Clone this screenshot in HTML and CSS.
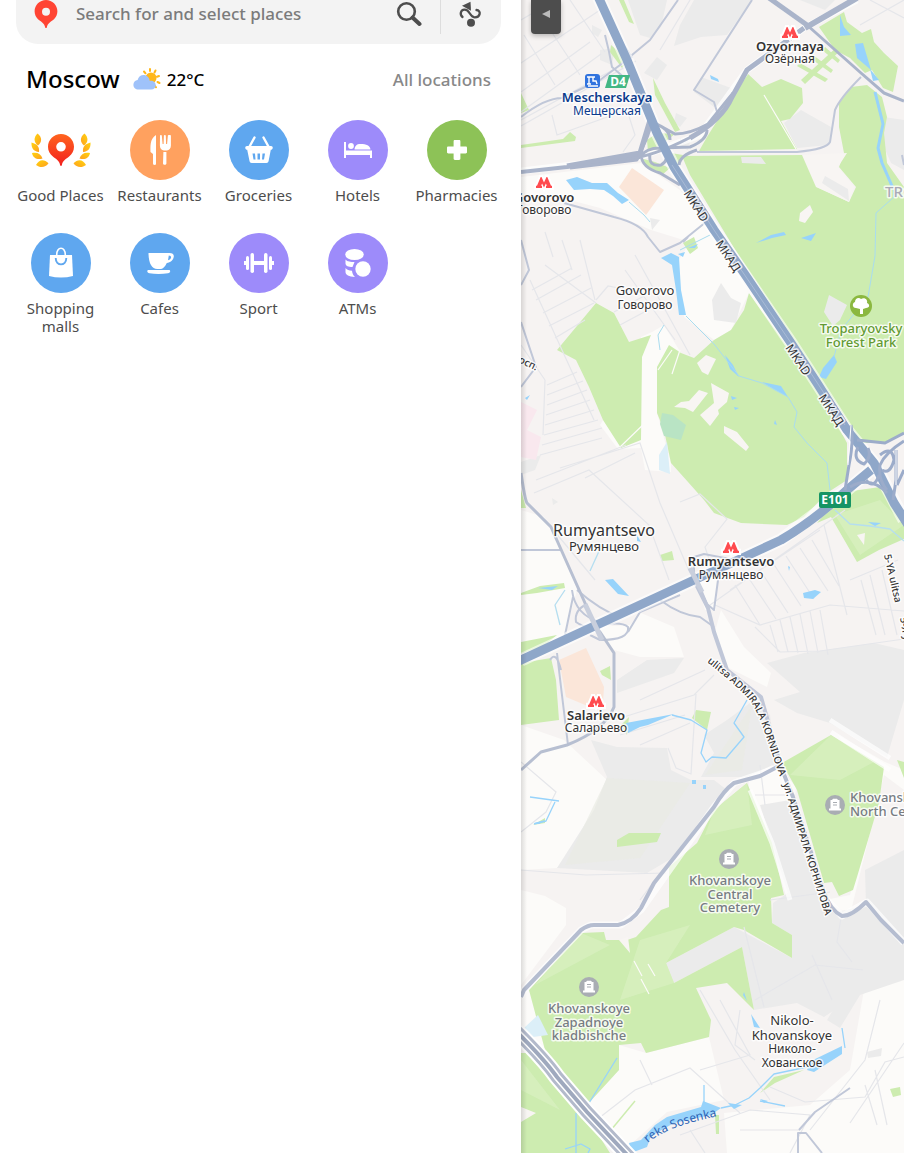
FILE: index.html
```html
<!DOCTYPE html>
<html lang="en">
<head>
<meta charset="utf-8">
<meta name="viewport" content="width=device-width, initial-scale=1">
<title>Moscow map</title>
<link rel="stylesheet" href="styles.css">
</head>
<body>
<aside class="sidebar">
  <form class="search" role="search">
    <svg class="search-pin" viewBox="0 0 24 30" aria-hidden="true"><path fill="#ff4433" fill-rule="evenodd" d="M12 1C5.700 1 .6 6 .6 12.300c0 3.200 1.300 6 3.400 8 2.300 2.100 6.500 3.700 7.200 8.200.1.700 1.500.7 1.600 0 .7-4.500 4.900-6.100 7.200-8.200 2.100-2 3.400-4.800 3.400-8C23.400 6 18.300 1 12 1Zm0 7.700a4 4 0 1 1 0 8 4 4 0 0 1 0-8Z"/></svg>
    <input class="search-input" type="text" placeholder="Search for and select places" aria-label="Search for and select places">
    <button class="icon-button" type="submit" aria-label="Search"><svg width="26" height="26" viewBox="0 0 26 26" fill="none" stroke="#4d4d4d"><circle cx="10.500" cy="10.500" r="8.300" stroke-width="2.600"/><path d="M16.500 16.500 23.500 23" stroke-width="4" stroke-linecap="round"/></svg></button>
    <span class="divider"></span>
    <button class="icon-button route" type="button" aria-label="Directions"><svg width="26" height="26" viewBox="0 0 26 26"><path d="M4.500 16C1.500 13.500 2.500 9 6.500 8.700c5.500-.3 5 7.300 10 7.600 6 .3 7-6.800 2-7.300" fill="none" stroke="#4d4d4d" stroke-width="2.300" stroke-linecap="round"/><circle cx="13" cy="21.700" r="4" fill="#4d4d4d"/><path d="m4 4.700 8.500-4 .5 9z" fill="#4d4d4d"/></svg></button>
  </form>

  <header class="city">
    <h1 class="city-name">Moscow</h1>
    <a class="weather" href="#weather">
      <svg width="28" height="22" viewBox="0 0 28 22" aria-hidden="true"><g stroke="#ffb71b" stroke-width="2" stroke-linecap="round"><path d="m11 3.500 1.500 1.800M17 1v2M22.500 2.500l-1 2M26 8l-2 .8M24.500 14l2 1M22 18l1 1.300"/></g><circle cx="18" cy="10" r="5.500" fill="#ffb71b"/><path fill="#9fc2fa" d="M5.500 21.500C2.500 21.500.4 19.400.4 16.700c0-2.500 1.800-4.500 4.200-4.800C5.300 9 7.700 7 10.600 7c3.300 0 5.700 2.500 6.100 5.700 3.500-.5 6.100 1.600 6.100 4.600 0 2.500-1.900 4.200-4.400 4.200Z"/></svg>
      <span>22°C</span>
    </a>
    <a class="all-locations" href="#locations">All locations</a>
  </header>

  <nav class="catalog" aria-label="Categories">
    <a class="category" href="#good"><span class="disc"><svg width="60" height="60" viewBox="0 0 60 60"><defs><linearGradient id="pin" x2="0" y2="1"><stop stop-color="#ff641f"/><stop offset="1" stop-color="#f2201e"/></linearGradient><linearGradient id="gold" x2="1" y2="1"><stop stop-color="#ffd40e"/><stop offset="1" stop-color="#ff9f1f"/></linearGradient></defs><path fill="url(#pin)" fill-rule="evenodd" d="M30 14c-7.200 0-13 5.700-13 12.800 0 4 1.900 7.500 4.900 9.800 3 2.500 6.300 3.900 7.200 8.400.2 1.200 1.600 1.200 1.800 0 .9-4.500 4.200-5.900 7.200-8.400 3-2.300 4.900-5.800 4.900-9.800C43 19.700 37.200 14 30 14Zm0 8a4.800 4.800 0 1 1 0 9.600 4.800 4.800 0 0 1 0-9.600Z"/><g id="laurel" fill="url(#gold)"><path d="M6.500 13.500c5 4 4.500 8.500.5 12-4.500-3.500-4.500-8-.5-12Z"/><path d="M.5 22.500c6 1.500 8 4.500 7.500 9.500-5.500-.5-7.800-4-7.500-9.500Z"/><path d="M1 33c5.500-1 9 1 10.500 5.500-5.500 1.500-9.300-.2-10.500-5.500Z"/><path d="M5 45c3-5.500 8-6.200 12.500-1.700-3 4.500-8.500 4.700-12.500 1.700Z"/></g><use href="#laurel" transform="matrix(-1 0 0 1 60 0)"/></svg></span><span class="category-name">Good Places</span></a>
    <a class="category" href="#restaurants"><span class="disc orange"><svg width="60" height="60" viewBox="0 0 60 60" fill="#fff"><path d="M26 15v29.500c-2 1-3 .3-3-1V34l-2.500-2c0-5-1-13 5.500-17ZM30 15.500c0-.8 1.800-.8 1.800 0L32.600 24h1l.3-8.500c0-.8 1.900-.8 1.900 0l.3 8.500h1l.8-8.500c0-.8 3-.8 3 0v10c0 2.800-1.700 4.800-4 4.900h-3c-2.400-.1-4-2.100-4-4.900ZM33.400 32h3v11.500c0 1.700-3.400 1.700-3.400 0Z"/></svg></span><span class="category-name">Restaurants</span></a>
    <a class="category" href="#groceries"><span class="disc blue"><svg width="60" height="60" viewBox="0 0 60 60" fill="#fff"><path d="m25.500 17.500-5.500 10M34.500 17.500l5.500 10" stroke="#fff" stroke-width="2.400" stroke-linecap="round"/><path fill-rule="evenodd" d="M18 26h24c1.500 0 2 1.200 1.600 2.400-.3.900-1 1.300-1.800 1.300L39.600 41c-.2 1.300-1 2-2.200 2H22.700c-1.200 0-2-.7-2.200-2l-2.300-11.300c-.8 0-1.600-.4-1.800-1.300-.4-1.200.1-2.400 1.600-2.400Zm5.500 7.500 1 6h2l-.5-6Zm5 0v6h2.500v-6Zm5 0-.5 6h2l1-6Z"/></svg></span><span class="category-name">Groceries</span></a>
    <a class="category" href="#hotels"><span class="disc violet"><svg width="60" height="60" viewBox="0 0 60 60" fill="#fff"><path d="M16 22h2v8.500h26V38h-2v-3H18v3h-2ZM26.500 29.500c.3-3.500 2-5.500 6-5.500 6 0 9.500 1.500 10 5.500Z"/><circle cx="23" cy="26" r="2.900"/></svg></span><span class="category-name">Hotels</span></a>
    <a class="category" href="#pharmacies"><span class="disc green"><svg width="60" height="60" viewBox="0 0 60 60" fill="#fff"><path d="M28 20h4c1 0 1.400.5 1.400 1.400v5.200h5.200c.9 0 1.400.4 1.400 1.400v4c0 1-.5 1.400-1.400 1.400h-5.200v5.200c0 .9-.4 1.400-1.400 1.400h-4c-1 0-1.400-.5-1.400-1.400v-5.200h-5.200c-.9 0-1.400-.4-1.400-1.400v-4c0-1 .5-1.400 1.400-1.400h5.200v-5.200c0-.9.4-1.400 1.400-1.400Z"/></svg></span><span class="category-name">Pharmacies</span></a>
    <a class="category" href="#malls"><span class="disc blue"><svg width="60" height="60" viewBox="0 0 60 60"><path fill="#fff" d="M19 22h22l1 21c-8 2-16 2-24 0Z"/><path d="M25.700 22c-.3-9 8.900-9 8.600 0" fill="none" stroke="#fff" stroke-width="1.600"/><path d="M24.700 25c0 8.500 10.600 8.500 10.600 0" fill="none" stroke="#5fa7ef" stroke-width="1.900"/></svg></span><span class="category-name">Shopping malls</span></a>
    <a class="category" href="#cafes"><span class="disc blue"><svg width="60" height="60" viewBox="0 0 60 60"><path fill="#fff" fill-rule="evenodd" d="M18.500 20H38c4-.5 6 1 5.800 3.500-.3 3.500-3.500 6-7 6.500-2 4-4 6-6.500 6h-3c-5.500 0-8.800-6-8.800-16Zm20.300 2.500-.8 4.800c4-1 4-4.800.8-4.800ZM18 37h21.500c1.400 1 .5 3-1.500 3.300-6 1-13 1-18.500 0-2-.3-3-2.300-1.500-3.300Z"/></svg></span><span class="category-name">Cafes</span></a>
    <a class="category" href="#sport"><span class="disc violet"><svg width="60" height="60" viewBox="0 0 60 60" fill="#fff"><rect x="15" y="28" width="3" height="4"/><rect x="42" y="28" width="3" height="4"/><rect x="24" y="28" width="12" height="4"/><rect x="17" y="23" width="3" height="14" rx="1.500"/><rect x="21.500" y="20" width="3.500" height="20" rx="1.700"/><rect x="35" y="20" width="3.500" height="20" rx="1.700"/><rect x="40" y="23" width="3" height="14" rx="1.500"/></svg></span><span class="category-name">Sport</span></a>
    <a class="category" href="#atms"><span class="disc violet"><svg width="60" height="60" viewBox="0 0 60 60" fill="#fff"><ellipse cx="26.500" cy="21.500" rx="9.300" ry="5.500"/><path d="M17.500 26.500c2 2.500 5 2.300 9 2.500l-2 5c-4 0-7-1-7-3.500ZM17.500 35c1.500 2 3.500 2.500 6.500 2.700.2 2.500 1.200 4.500 3 6.300-6-.3-9.500-2-9.500-5Z"/><circle cx="35" cy="36" r="7.700"/></svg></span><span class="category-name">ATMs</span></a>
  </nav>
</aside>

<main class="map">
<svg class="map-canvas" viewBox="521 0 383 1153" preserveAspectRatio="xMinYMin slice" role="img" aria-label="Map of south-west Moscow">
  <defs>
    <path id="logo-m" d="M-8 5v-2.200h1L-3.300-6h.8L0-.5 2.500-6h.8L7 2.800h1V5H2V2.800h.9L1.900.4 0 4.500-1.900.4-2.900 2.800h.9V5Z"/>
    <g id="tomb"><circle r="10" fill="#a9adb3"/><path fill="#fff" d="M-6 5.500v-2h1.500V-5H-3l1-1.200h4L3-5h1.500v8.500H6v2Z"/><path d="M-2-2.500h4M-2 0h4" stroke="#a9adb3" stroke-width="1.200"/></g>
  </defs>
  <rect x="521" width="383" height="1153" fill="#f6f3f2"/>

  <g fill="#fcfbf9">
    <path d="M521 177 641 163 680 190 714 230 749 293 731 330 714 340 684 317 677 263 690 242 651 230 600 208 566 199 521 195Z"/>
    <path d="M641 337 652 332 664 325 681 353 657 367 657 413 671 463 671 472 645 470 641 448 618 449 600 425 642 357Z"/>
    <path d="M521 510 544 517 564 553 577 590 564 637 521 660ZM594 627 630 625 641 613 674 627 684 657 640 657 614 650ZM721 610 744 647 771 673 767 687 727 667 714 635ZM697 583 718 577 716 610 705 610Z"/>
    <path d="M521 725 564 740 607 780 581 840 557 868 521 870ZM521 890 545 896 566 908 566 925 521 985ZM747 760 761 760 781 770 796 787 794 805 782 820 788 870 772 840 750 800Z"/>
    <path d="M587 1105 619 1070 619 1045 646 1053 709 1037 724 1100 667 1112 630 1145ZM864 990 904 977V1153H727L724 1113 810 1105 850 1070ZM522 990 529 990 552 1040 545 1050 521 1030Z"/>
    <path d="M838 735 885 762 904 770V790L884 775 850 915 825 900 850 895 879 803Z"/>
  </g>

  <g fill="#ebebeb">
    <path d="M628 0H667L661 27 650 38 640 35ZM694 0H752L727 35 701 37 674 46 680 25ZM701 77 731 88 727 105 714 107 694 92ZM657 57 667 65 657 80 644 73ZM784 123 801 110 831 127 829 145 797 148ZM884 117 904 120V170L891 163 884 147ZM676 113 687 118 680 127 674 122ZM592 25 602 30 598 37 592 33ZM600 50 615 48 612 65 600 60ZM800 0H835L825 10Z"/>
    <path d="M721 283 731 298 741 303 736 323 714 320 712 300ZM521 462 541 455 535 470 521 475ZM552 498 558 502 553 505Z"/>
    <path d="M767 663 804 653 874 643 904 650V700L887 757 830 723 797 713 774 700 800 692ZM617 680 647 660 684 658 674 673 617 693ZM591 740 617 747 667 748 671 770 691 780 714 780 727 790 674 857 647 873 557 868 594 810 607 777ZM727 720 754 700 770 715 777 763 747 777 701 777 714 753 704 735Z"/>
    <path d="M760 805 790 800 824 887 827 897 838 912 866 905 865 870 904 850V980L854 997 824 1017 797 1003 754 1010 742 947 674 983 666 963 734 927 792 958V935L772 923 773 903 788 893Z"/>
    <path d="M845 990 860 995 840 1028 827 1020ZM867 1052 882 1048 881 1056 868 1058ZM680 138 690 142 688 150 680 147ZM650 218 660 220 652 230Z"/>
  </g>
  <g fill="#e9ebe4" opacity=".7"><path d="M607 778 690 783 640 858 565 865ZM705 775 752 705 742 770Z"/></g>

  <g fill="#cdecb0">
    <path d="M747 73 762 87 781 79 802 88 803 103 790 119 781 121 797 149 699 151 707 137Z"/>
    <path d="M682 156 804 155 817 187 849 202 856 187 839 167 844 153 839 127 839 103 851 87 867 85 882 97 887 117 884 133 887 163 904 187V434L887 443 862 443 734 248 690 175Z"/>
    <path d="M749 293 744 310 731 330 714 340 694 358 681 353 669 345 657 367 657 413 664 430 671 463 688 482 704 500 714 513 741 523 787 525 804 517 827 493 847 480 847 443 820 393Z"/>
    <path d="M596 303 614 313 629 342 651 335 642 357 641 440 621 448 603 420 589 387 576 360 557 350Z"/>
    <path d="M817 523 831 517 857 562 879 550 904 539V520L880 487 845 492Z"/>
    <path d="M819 27 844 12 847 22 862 33 871 29 874 42 884 53 898 66 893 92 883 88 872 70 865 73 850 58 835 50ZM839 45 842 49 805 84 801 80ZM800 63 828 79 825 82 797 66ZM813 55 833 70 831 73 810 58ZM825 47 840 60 838 63 822 50Z"/>
    <path d="M619 0H624L634 24 629 22ZM611 45 628 60 622 68 610 52ZM653 78 665 103 680 130 675 132 655 95ZM521 145 563 139 570 132 576 137 575 141 521 148ZM521 93 529 110 521 113ZM647 140 657 133 675 134 666 141 648 152ZM640 158 655 162 670 168 662 175 645 166ZM671 153 683 155 678 165ZM683 243 694 237 698 248 690 254Z"/>
    <path d="M521 490 526 508 521 508ZM521 593 540 586 564 583 565 588 537 593 521 595ZM521 642 557 635 545 645 521 654ZM521 663 551 658 556 680 559 720 521 725ZM660 555 672 551 674 560 662 561ZM600 671 610 666 611 680 602 675Z"/>
    <path d="M692 718 696 710 711 712 707 730ZM617 840 629 833 661 833 657 842 617 847ZM621 725 629 717 627 735ZM533 825 545 818 545 823Z"/>
    <path d="M714 810 747 783 772 843 784 895 771 898 772 923 792 935V958L744 930 734 927 666 963 674 983 742 947 754 1010 727 983 696 988 711 1020 709 1037 646 1053 641 1043 619 1045V1070L587 1105 545 1050 529 990 581 933 604 932 606 940 627 940 636 937 661 910 669 907V867L697 843Z"/>
    <path d="M782 763 831 735 884 767 879 803 857 877 853 890 839 896 832 882 824 883 797 790ZM521 1053 534 1053 591 1123 610 1153H521ZM760 1093 774 1077 804 1070 775 1083ZM890 1089 900 1087 901 1095 893 1097ZM715 1115H719V1134H716ZM897 760 904 762V778Z"/>
  </g>
  <g fill="#d8f0c0" opacity=".75"><path d="M714 810 747 783 752 825 705 835ZM581 933 610 945 535 985ZM640 940 690 925 666 963 674 983 620 1000ZM831 735 874 762 840 780 790 775ZM835 515 880 500 904 525 860 555ZM521 1060 560 1110 521 1090Z"/></g>
  <path fill="#b9e4c4" d="m662 413 11 2 13 10-5 15-17-4-4-12Z"/>
  <path fill="#dceff8" d="m659 455 8-13 3 32-11-4ZM524 1028l14-13 10 20-15 2Z"/>

  <g fill="#f8f5f3">
    <path d="M674 407 681 402 689 401 699 390 708 393 693 412 685 408ZM711 383 729 393 727 402 718 410 719 414 710 426 700 415 714 403ZM697 363 706 355 716 359 708 375 702 372ZM724 426 737 432 749 447 746 451 724 433ZM810 205 813 212 805 223 799 221 800 213ZM802 155 847 153 838 167 854 187 849 202 816 187ZM857 535 865 533 864 545ZM521 1107 536 1113 521 1122ZM619 940 628 937 630 953Z"/>
  </g>
  <path fill="#ebebeb" d="m829 295 18 10-7 15-7 6-9-14ZM825 176l23 13 1 12-27-18ZM741 157h20l5 7-24-1Z"/>
  <path fill="#fbe6d9" d="m632 168 32 22-18 25-27-28ZM559 660l27-12 18 39-1 16-13 4-24-10Z"/>
  <path fill="#f9e8ee" d="m521 402 16 8-10 20 14 7-5 23-15-3Z"/>
  <path d="M764 95 796 149M648 420 619 448M672 350l-14 20M680 350l-8 24M634 961l8 15M641 979l8 15M648 964l7 12" stroke="#fcfbf9" stroke-width="1.200" fill="none"/>
  <path d="M611 1130l24-29" stroke="#cdecb0" stroke-width="1.500" fill="none"/>

  <g fill="none" stroke="#e5e6ea" stroke-width="1.200">
    <path d="M521 63 600 10M521 92 590 42M524 35 555 85M545 22 580 75M570 0 605 52M521 20 555 0M521 112l80-58M552 115l5 20 70-25 8 25-12 17M521 120l110-60M521 126l115-65M660 50l30-50M870 0l34 18M860 25l44-25"/>
    <path d="M530 280 594 420M545 265 596 303M545 232l8 25M562 240l10 30M580 240l15 60M532 290l40-22M536 300l45-25M543 313l48-25M549 326l45-23M555 338l30-18M596 300l12-14 40 8M625 270l50 70M635 255l55 100M620 325l28-15M614 312l30-16"/>
    <path d="M521 345 545 380M545 380 543 435M547 385l30-13M547 395l36-14M547 405l40-15M546 415l44-15M545 425l49-15M544 435l54-15M542 445l60-17M540 455l62-17M536 480l90-35M534 493l55-23 60 55 20 55M560 468l80-25 20 60 30 70M585 478l50-25M545 520l50 60M680 502l20-8 27 25-22 28 10 30"/>
    <path d="M710 605 845 510M730 590l90-60M735 585l25 40M748 577l28 42M760 570l28 43M773 563l28 43M786 556l28 43M800 548l28 43M812 540l27 46M824 525l23 90M715 605l45 20 70-20 74 6M755 627l25 25 40-1 84-12M770 625l8 27M780 620l8 32M790 617l8 36M800 614l8 40M810 611l8 42M820 610l8 45M861 580l15 55M870 575l15 60M882 570l15 65M850 580l48-20"/>
    <path d="M614 720l80-25 20-20M620 735l65-20M640 745l50-22M640 700l65-30M668 748l8 20 15 6 5-80M521 762l35 30-10 20-25 20M521 870l65 5 80-2M640 900l30-40"/>
    <path d="M765 805l-5-40M755 795h40M770 900l60-8M842 912l-5 30 15 20M744 927l20 80M755 1000l60-35 48 5M812 955l20 45M700 990l35 60 35 50M720 1000l30 55-50 15M740 1010l-5 35 20 15M590 1125l45-35 55-22 50 45M640 1060l12 25M770 1087l35 15 60-5 20-35 19-5M865 1085l12 40M875 1070l12 55M680 1135l70-25 60 5-20 38M690 1130l15 23M850 1123l54-80M740 1130h60M880 1000l-15 60-55 70"/>
  </g>

  <g fill="#97d3fb">
    <path d="M566 180 577 177 592 183 607 183 618 193 629 200 622 204 613 196 604 190 590 189 574 190ZM661 258 671 253 679 257 681 290 686 315 679 315 676 290 672 265ZM678 254l7-2-2 5ZM688 248l10-4-3 4ZM710 75l8 4 1 3-8-3ZM840 15l4 12 7 8-11 1ZM855 44l8-1 8 27-14-12ZM870 69l9 11-6 1Z"/>
    <path d="M756 243 771 235 784 232 786 235 772 238ZM801 238 816 233 811 241ZM819 377 823 368 834 355 837 362 826 379ZM762 382 781 386 788 397 777 391ZM725 355l8 10 6 12-9-8ZM731 396l6 2-5 2ZM734 407l5 1-4 2ZM775 420l2 5-3-1ZM525 398l5-3-3 5Z"/>
    <path d="M605 580 613 579 629 596 618 594ZM637 535l4 7-4-1ZM803 593 815 590 821 592 813 599 804 598ZM788 566l2 1-1 4ZM538 588l20-2-6 4ZM626 723 642 720 674 714 648 725 640 727 628 733ZM692 780h4v4h-4ZM703 785h3v4h-3ZM534 823l11-3-6 4Z"/>
    <path d="M629 1143 641 1140 655 1125 667 1117 701 1107 703 1101 721 1108 711 1115 674 1123 651 1136 647 1147 631 1153ZM728 1103l14 2-8 4ZM807 1070 811 1061 842 1046V1054L814 1072ZM751 1014l9 14-6-1ZM744 992l3 9-4-6ZM760 1099l8 2-4 2ZM868 522l13 1-6 3Z"/>
  </g>
  <g fill="none" stroke="#97d3fb" stroke-width="1.300" stroke-linejoin="round">
    <path d="M875 92 883 124 878 148 882 163 892 186" stroke-width="3"/>
    <path d="M893 185 894 197 876 213 875 256 868 297 841 330 834 357M686 316 714 344 739 376 762 383 788 397 797 412 794 427 807 443 827 463 830 490M664 325l-6 10 2 15M629 202l15 13 6 7M680 250l30-15" stroke="#a9dcef" stroke-width="1"/>
    <path d="M747 700 734 723 744 737 726 758 712 757 706 762 701 753 707 730 691 720 672 715M530 797 559 801M555 802 546 821 534 824M721 1108 735 1105 749 1098 760 1088 774 1074 807 1067M704 1103V1085M760 1101l25 5M845 1048l-3-20M591 1118l-2-15 28-45M565 1149l16-5 9 5-2 4M576 1153v-40"/>
    <path d="M835 510l15 14 20 2 20 3 14 12M590 571l10-22M565 590l-10 15 5 20" stroke="#b5def0"/>
  </g>

  <g fill="none" stroke="#fff" stroke-width="7" stroke-linejoin="round" opacity=".7">
    <path d="M521 171 640 157 700 135 747 70 804 28 857 0M521 997 524 990 581 930 591 925 621 925 641 910 714 807 734 783 781 767 824 897 842 916 867 902 904 943"/>
    <path d="M750 790 772 843 790 900M831 732 890 770M830 720l60 38" stroke-width="5"/>
  </g>
  <g fill="none" stroke="#c0c7d8" stroke-width="2" stroke-linejoin="round">
    <path d="M521 117Q545 98 562 98L600 80 620 65 650 40 678 0M605 35Q609 50 612 67L627 80M611 33Q626 45 632 58M752 0 694 90 714 102 718 115M697 152H797Q827 149 830 142L835 110Q840 98 861 77M564 203 614 217Q642 224 648 237L660 252 680 243 696 230 706 222M521 240 529 270 521 285M521 322 536 367 521 387M683 242l5-5M904 165l-2-10"/>
    <path d="M521 550H560M694 580V557L704 554 735 560M697 580 707 604 714 610 718 580M660 600Q680 615 700 617L714 627M572 590Q575 615 600 622M577 590Q600 610 620 617M587 604Q574 610 576 622Q590 632 600 622M594 627Q620 620 628 627Q630 640 600 640L590 635M628 632 640 612 680 595M557 653 561 687 568 745M573 597 565 635M550 660Q556 650 561 670"/>
    <path d="M521 473Q525 500 527 503L551 527 576 583 594 623 614 653V707Q605 730 567 745L541 752 521 770" stroke="#b7bfd1" stroke-width="3"/>
    <path d="M694 580 708 608 714 632 727 670 761 697 781 767" stroke="#c0c7d8" stroke-width="4"/>
    <path d="M521 997 524 990 581 930Q588 925 594 925H618Q632 922 641 908L654 883 714 807Q724 790 734 783L760 776 781 765M781 767 793 797 824 892Q830 910 842 916 852 916 866 902L881 920 904 943" stroke="#b5bdd0" stroke-width="4"/>
    <path d="M798 1153V1133H806L822 1153M799 1130 815 1112 850 1088" stroke="#c0c7d8" stroke-width="2"/>
  </g>

  <g fill="none" stroke="#fff" opacity=".6" stroke-width="13"><path d="M596-8 627 60 657 133 674 167 714 230 791 343 817 383 847 430 874 463 904 520M521 660 694 580 781 540 847 490 871 470"/></g>
  <g fill="none" stroke="#aab4ca" stroke-linejoin="round">
    <path d="M521 172 567 167 640 157" stroke-width="4"/>
    <path d="M567 166 640 153 650 120M690 138Q722 120 732 97L747 70 777 48 804 28" stroke-width="5"/>
    <path d="M769-2 807 25" stroke-width="5"/><path d="M807 25 861 73 884 93 904 101" stroke-width="3"/><path d="M805 28 857-2" stroke-width="6"/>
    <path d="M651 115Q654 120 646 140L637 160 570 168M655 123 675 134Q690 134 708 124L733 93M640 157Q670 150 707 128M640 157Q646 148 660 148L690 147Q707 140 707 130M641 155Q642 168 660 173L680 185M650 154Q648 167 661 165 670 160 665 150M653 123Q670 128 670 140M679 165Q680 155 697 150" stroke-width="3"/>
  </g>
  <g fill="none" stroke="#8fa7c9" stroke-width="9" stroke-linejoin="round">
    <path d="M596-8 627 60 657 133 674 167 714 230 744 273 791 343 817 383 847 430 874 463 894 503 908 525M519 661 694 580 725 566 781 540Q815 520 847 490L871 470"/>
  </g>
  <g fill="none" stroke="#9cacca" stroke-width="3" stroke-linejoin="round">
    <path d="M851 425Q854 440 849 465L845 490M857 440 885 443 904 433M904 441Q885 453 880 465 878 480 887 490M896 450V480L893 500M850 487Q870 475 887 493M858 447Q852 460 864 464 872 457 868 448M880 455Q892 445 894 460 890 475 882 470M866 480Q874 490 879 475M904 470 897 485"/>
    <path d="M851 425 848 465M896 450V485" stroke="#fff" stroke-width="1"/>
  </g>
  <path d="M672 165 714 230 791 343 845 425" fill="none" stroke="#a9bbd6" stroke-width="1"/>
  <path d="M585 604 602 640M690 568 702 592" stroke="#c9cfdd" stroke-width="5"/>
  <g fill="none"><path d="M516 1031Q545 1060 557 1077L587 1112 632 1160" stroke="#fff" stroke-width="17"/><path d="M516 1031Q545 1060 557 1077L587 1112 632 1160" stroke="#b3bacb" stroke-width="13"/><path d="M516 1031Q545 1060 557 1077L587 1112 632 1160" stroke="#fff" stroke-width="7"/><path d="M516 1031Q545 1060 557 1077L587 1112 632 1160" stroke="#9fa9be" stroke-width="4"/></g>

  <defs>
    <path id="kornilova-en" d="M707 662Q730 680 747 697 757 709 764 730L782 783"/>
    <path id="kornilova-ru" d="M783 784 799 835 828 924"/>
    <path id="sosenka" d="M648 1143Q668 1124 740 1112"/>
  </defs>
  <g class="label street">
    <text transform="translate(696 206) rotate(57)" y="4">MKAD</text><text transform="translate(728 256) rotate(56)" y="4">МКАД</text><text transform="translate(798 360) rotate(56)" y="4">MKAD</text><text transform="translate(831 410) rotate(56)" y="4">МКАД</text>
  </g>
  <g class="label street-small">
    <text><textPath href="#kornilova-en">ulitsa ADMIRALA KORNILOVA</textPath></text>
    <text><textPath href="#kornilova-ru">ул. АДМИРАЛА КОРНИЛОВА</textPath></text>
    <text transform="translate(884 555) rotate(77)">5-YA ulitsa</text><text transform="translate(900 618) rotate(80)">5-Я у</text>
    <text transform="translate(518 362) rotate(26)">осп.</text>
  </g>
  <text class="label river"><textPath href="#sosenka">reka Sosenka</textPath></text>

  <g class="label station">
    <text x="790" y="51">Ozyornaya</text><text x="544" y="202">Govorovo</text><text x="731" y="566">Rumyantsevo</text><text x="596" y="720">Salarievo</text>
  </g>
  <g class="label native">
    <text x="790" y="63">Озёрная</text><text x="544" y="214">Говорово</text><text x="731" y="579">Румянцево</text><text x="596" y="732">Саларьево</text>
    <text x="645" y="309">Говорово</text><text x="792" y="1053">Николо-</text><text x="792" y="1067">Хованское</text>
  </g>
  <g class="label town"><text x="645" y="295">Govorovo</text><text x="792" y="1025">Nikolo-</text><text x="792" y="1040">Khovanskoye</text></g>
  <text class="label city-label" x="604" y="536">Rumyantsevo</text><text class="label city-native" x="604" y="551">Румянцево</text>
  <text class="label rail" x="607" y="102">Mescherskaya</text><text class="label rail-native" x="607" y="115">Мещерская</text>
  <g class="label park"><text x="861" y="333">Troparyovsky</text><text x="861" y="347">Forest Park</text></g>
  <g class="label cemetery">
    <text x="730" y="885">Khovanskoye</text><text x="730" y="899">Central</text><text x="730" y="912">Cemetery</text>
    <text x="589" y="1013">Khovanskoye</text><text x="589" y="1027">Zapadnoye</text><text x="589" y="1040">kladbishche</text>
  </g>
  <g class="label cemetery start"><text x="850" y="802">Khovanskoye</text><text x="850" y="816">North Cemetery</text></g>
  <text class="label district" x="885" y="197">TROPARYOVO</text>

  <g fill="#ff4b4f" stroke="#fff" stroke-width="4" paint-order="stroke">
    <use href="#logo-m" x="790" y="33"/><use href="#logo-m" x="544" y="183"/><use href="#logo-m" x="731" y="548"/><use href="#logo-m" x="596" y="702"/>
  </g>
  <use href="#tomb" x="729" y="859"/><use href="#tomb" x="589" y="987"/><use href="#tomb" x="835" y="805"/>
  <circle cx="861" cy="306" r="11" fill="#8bb840"/><path fill="#fff" d="M856 308c-4 0-4-5-1-6 0-4 4-5 6-3 4-2 7 1 6 4 3 1 3 5-1 5l-3 1v5h-3v-5Z"/>
  <rect x="585" y="74" width="15" height="14" rx="3" fill="#3173de"/><path d="M587 77h8M589 77v7M593 77v4h3l1 3M587 84h4M588 86h10" stroke="#fff" fill="none" stroke-width="1.400"/>
  <path d="M609 75h21l-4 13h-21Z" fill="#43b784"/><text class="line-badge" x="618" y="86">D4</text>
  <rect x="819" y="492" width="32" height="16" rx="2" fill="#169464"/><text class="route-badge" x="835" y="504">E101</text>
</svg>
<button class="collapse" type="button" aria-label="Hide sidebar"><svg width="8" height="10" viewBox="0 0 8 10"><path d="M8 1v8L0 5Z" fill="#bbb"/></svg></button>
</main>
</body>
</html>
```
FILE: styles.css
```css
* { box-sizing: border-box; }

body {
  margin: 0;
  min-height: 100vh;
  display: flex;
  background: #fff;
  color: #000;
  font-family: "Noto Sans", "Open Sans", sans-serif;
}

a { color: inherit; text-decoration: none; }

button { border: 0; padding: 0; background: none; cursor: pointer; }

svg { display: block; }

.sidebar { flex: 0 0 521px; }

.search {
  display: flex;
  align-items: center;
  height: 44px;
  margin: 0 20px 0 16px;
  padding: 0 17px 17px 18px;
  border-radius: 0 0 22px 22px;
  background: #f3f3f3;
}

.search-pin { width: 24px; height: 30px; }

.search-input {
  flex: 1;
  min-width: 0;
  height: 26px;
  margin-left: 18px;
  padding: 0;
  border: 0;
  outline: 0;
  background: none;
  font: 500 17px/24px "Noto Sans", sans-serif;
  color: #4d4d4d;
}

.search-input::placeholder { color: #7b7b7b; opacity: 1; }

.icon-button { flex: none; }

.divider {
  flex: none;
  align-self: flex-start;
  width: 1px;
  height: 34px;
  margin: 0 17px 0 18px;
  background: #ddd;
}

.city {
  display: flex;
  align-items: center;
  height: 40px;
  margin: 15px 30px 0 26px;
}

.city-name { margin: 0; font-size: 24px; font-weight: 500; line-height: 32px; }

.weather {
  display: flex;
  align-items: center;
  gap: 6px;
  margin-left: 13px;
  font-size: 17px;
  font-weight: 500;
}

.all-locations { margin-left: auto; font-size: 17px; font-weight: 500; color: #888; }

.catalog {
  display: grid;
  grid-template-columns: repeat(5, 1fr);
  row-gap: 29px;
  margin: 21px 15px 0 11px;
}

.category {
  display: flex;
  flex-direction: column;
  align-items: center;
  gap: 6px;
  color: #4d4d4d;
  font-size: 15px;
  line-height: 18px;
  text-align: center;
}

.disc { width: 60px; height: 60px; border-radius: 50%; }
.orange { background: #ffa15f; }
.blue { background: #5fa7ef; }
.violet { background: #9d8bfa; }
.green { background: #8dc257; }

.category-name { max-width: 90px; }

.map {
  position: relative;
  flex: 1;
  min-width: 0;
  height: 100vh;
  overflow: hidden;
  background: #f6f3f2;
}

.map::after {
  content: "";
  position: absolute;
  inset: 0 auto 0 0;
  width: 6px;
  background: linear-gradient(90deg, rgba(0, 0, 0, .12), transparent);
}

.map-canvas { width: 100%; height: 100%; }

.collapse {
  position: absolute;
  top: 0;
  left: 10px;
  display: flex;
  align-items: center;
  justify-content: center;
  width: 30px;
  height: 34px;
  padding-bottom: 6px;
  border-radius: 0 0 4px 4px;
  background: #4d4d4d;
  box-shadow: 0 2px 5px rgba(0, 0, 0, .25);
}

.label {
  fill: #333;
  stroke: rgba(255, 255, 255, .8);
  stroke-width: 3px;
  stroke-linejoin: round;
  paint-order: stroke;
  text-anchor: middle;
  font-size: 13px;
}

.station { font-weight: 600; }
.native { font-size: 12px; }
.town { font-size: 13px; }
.city-label { font-size: 16px; }
.city-native { font-size: 13px; }
.rail { fill: #0b3b8c; font-weight: 600; }
.rail-native { fill: #0b3b8c; font-size: 12px; }
.park { fill: #629a32; font-weight: 500; }
.cemetery { fill: #777c83; font-weight: 500; }
.district { fill: #aaaab8; font-size: 15px; font-weight: 500; text-anchor: start; }
.start { text-anchor: start; }
.street { font-size: 12px; }
.street-small { font-size: 10px; font-weight: 500; text-anchor: start; }
.river { fill: #2c62b5; stroke: none; font-size: 12px; text-anchor: start; }

.line-badge,
.route-badge {
  fill: #fff;
  font-size: 12px;
  font-weight: 700;
  text-anchor: middle;
}
```
